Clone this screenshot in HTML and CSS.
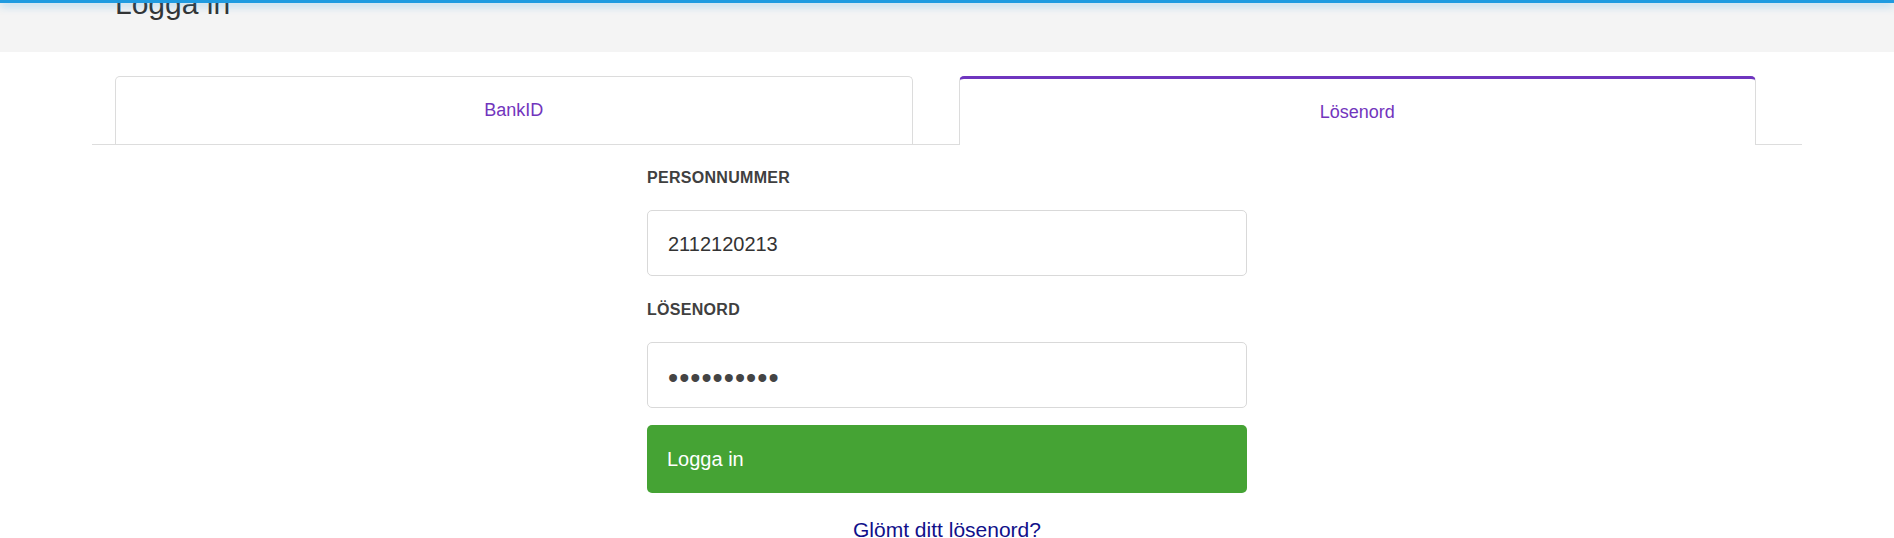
FILE: index.html
```html
<!DOCTYPE html>
<html lang="sv">
<head>
<meta charset="utf-8">
<title>Logga in</title>
<link rel="stylesheet" href="styles.css">
</head>
<body>
<div class="topbar"></div>
<header class="page-header">
  <div class="container">
    <h1 class="page-title">Logga in</h1>
  </div>
</header>
<main class="container">
  <ul class="tabs">
    <li class="tab"><a class="tab-link" href="#">BankID</a></li>
    <li class="tab active"><a class="tab-link" href="#">Lösenord</a></li>
  </ul>
  <form class="login">
    <label class="field-label" for="pnr">PERSONNUMMER</label>
    <input class="field-input" id="pnr" type="text" value="2112120213">
    <label class="field-label" for="pw">LÖSENORD</label>
    <input class="field-input password" id="pw" type="password" value="abcdefghij">
    <button class="submit" type="button">Logga in</button>
    <a class="forgot" href="#">Glömt ditt lösenord?</a>
  </form>
</main>
</body>
</html>
```
FILE: styles.css
```css
* { box-sizing: border-box; }

html, body {
  margin: 0;
  padding: 0;
  background: #ffffff;
  font-family: "Liberation Sans", Arial, sans-serif;
  color: #333333;
}

.topbar {
  position: fixed;
  top: 0;
  left: 0;
  right: 0;
  height: 3px;
  background: #1f9be0;
  box-shadow: 0 2px 9px rgba(31, 155, 224, 0.55);
  z-index: 10;
}

.page-header {
  background: #f4f4f4;
  height: 52px;
  overflow: hidden;
}

.container {
  width: 1710px;
  margin: 0 auto;
}

.page-title {
  margin: -13px 0 0 0;
  padding-left: 23px;
  font-size: 30px;
  font-weight: normal;
  line-height: 34px;
  color: #333333;
}

.tabs {
  list-style: none;
  margin: 24px 0 0 0;
  padding: 0 0 0 23px;
  display: flex;
  align-items: flex-start;
  border-bottom: 1px solid #dddddd;
}

.tab {
  flex: 1;
  margin-right: 46px;
  height: 68px;
  border: 1px solid #dcdcdc;
  border-bottom: 0;
  border-radius: 5px 5px 0 0;
  background: #ffffff;
}

.tab.active {
  height: 69px;
  margin-bottom: -1px;
  border-top: 3px solid #6f35bf;
}

.tab-link {
  display: flex;
  align-items: center;
  justify-content: center;
  height: 100%;
  font-size: 18px;
  color: #7235bd;
  text-decoration: none;
}

.login {
  width: 600px;
  margin: 23px auto 0;
  display: flex;
  flex-direction: column;
}

.field-label {
  display: block;
  font-size: 16px;
  line-height: 20px;
  font-weight: bold;
  letter-spacing: 0.3px;
  color: #404040;
  margin-bottom: 22px;
}

.field-input {
  display: block;
  width: 100%;
  height: 66px;
  margin: 0 0 24px 0;
  padding: 3px 20px 0;
  border: 1px solid #d9d9d9;
  border-radius: 5px;
  font-family: "Liberation Sans", Arial, sans-serif;
  font-size: 20px;
  color: #333333;
  background: #ffffff;
  outline: none;
}

.field-input.password {
  margin-bottom: 17px;
  font-size: 29px;
  letter-spacing: 1px;
  color: #444444;
  padding-top: 7px;
}

.submit {
  display: block;
  width: 100%;
  height: 68px;
  padding: 0 20px;
  border: 0;
  border-radius: 5px;
  background: #45a334;
  color: #ffffff;
  font-family: "Liberation Sans", Arial, sans-serif;
  font-size: 20px;
  text-align: left;
  cursor: pointer;
}

.forgot {
  align-self: center;
  margin-top: 25px;
  font-size: 21px;
  line-height: 23px;
  color: #10108a;
  text-decoration: none;
}
```
